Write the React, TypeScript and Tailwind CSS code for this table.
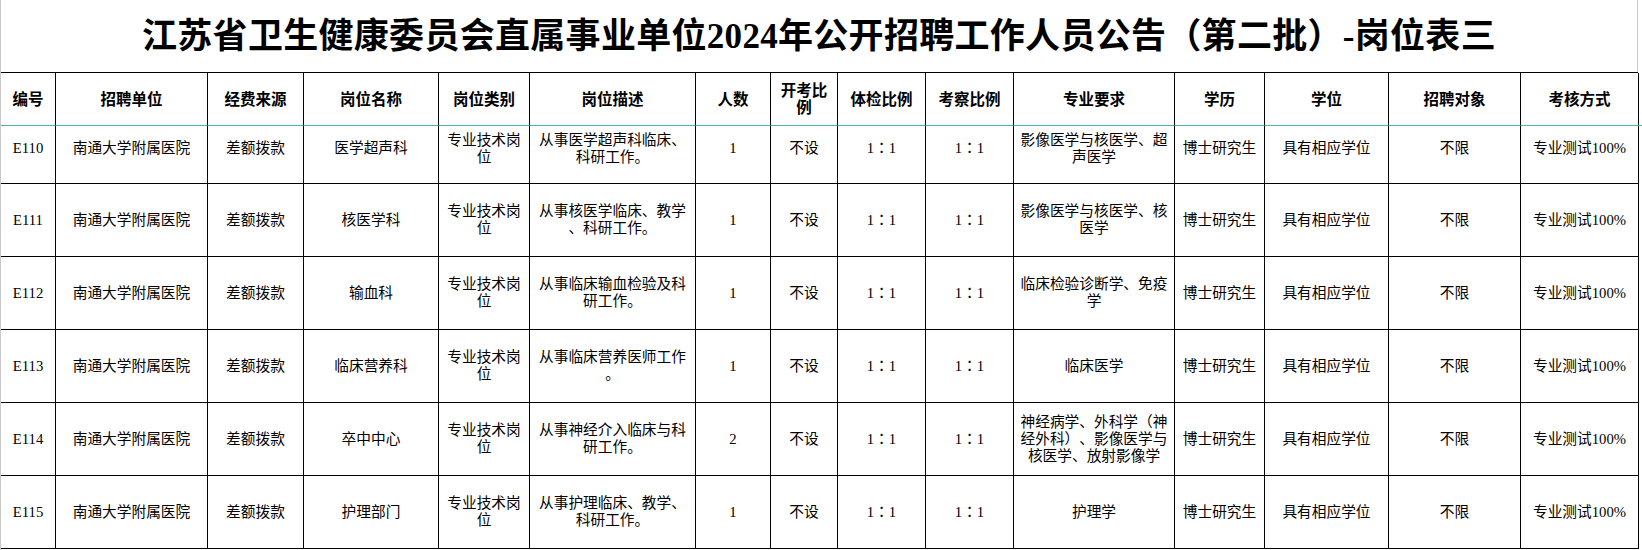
type Row = {
  code: string;
  unit: string;
  funding: string;
  post: string[];
  category: string[];
  desc: string[];
  count: string;
  exam: string;
  physical: string;
  inspect: string;
  major: string[];
  education: string;
  degree: string;
  target: string;
  method: string;
};

const COLS =
  "grid grid-cols-[55px_152px_96px_135px_91px_166px_75px_67px_88px_88px_161px_90px_124px_132px_118px]";

const HEADERS: string[][] = [
  ["编号"],
  ["招聘单位"],
  ["经费来源"],
  ["岗位名称"],
  ["岗位类别"],
  ["岗位描述"],
  ["人数"],
  ["开考比", "例"],
  ["体检比例"],
  ["考察比例"],
  ["专业要求"],
  ["学历"],
  ["学位"],
  ["招聘对象"],
  ["考核方式"],
];

const base = {
  unit: "南通大学附属医院",
  funding: "差额拨款",
  category: ["专业技术岗", "位"],
  exam: "不设",
  physical: "1：1",
  inspect: "1：1",
  education: "博士研究生",
  degree: "具有相应学位",
  target: "不限",
  method: "专业测试100%",
};

const ROWS: Row[] = [
  {
    ...base,
    code: "E110",
    post: ["医学超声科"],
    desc: ["从事医学超声科临床、", "科研工作。"],
    count: "1",
    major: ["影像医学与核医学、超", "声医学"],
  },
  {
    ...base,
    code: "E111",
    post: ["核医学科"],
    desc: ["从事核医学临床、教学", "、科研工作。"],
    count: "1",
    major: ["影像医学与核医学、核", "医学"],
  },
  {
    ...base,
    code: "E112",
    post: ["输血科"],
    desc: ["从事临床输血检验及科", "研工作。"],
    count: "1",
    major: ["临床检验诊断学、免疫", "学"],
  },
  {
    ...base,
    code: "E113",
    post: ["临床营养科"],
    desc: ["从事临床营养医师工作", "。"],
    count: "1",
    major: ["临床医学"],
  },
  {
    ...base,
    code: "E114",
    post: ["卒中中心"],
    desc: ["从事神经介入临床与科", "研工作。"],
    count: "2",
    major: ["神经病学、外科学（神", "经外科）、影像医学与", "核医学、放射影像学"],
  },
  {
    ...base,
    code: "E115",
    post: ["护理部门"],
    desc: ["从事护理临床、教学、", "科研工作。"],
    count: "1",
    major: ["护理学"],
  },
];

const FONT = { fontFamily: '"Liberation Serif", "Noto Sans CJK SC", serif' };
// centred full-width colon for the 1：1 ratios
const RATIO_FONT = '"Liberation Serif", "Noto Sans CJK TC", serif';

export default function App() {
  return (
    <div className="flex h-[550px] w-[1642px] overflow-hidden bg-white text-black" style={FONT}>
      <div className="w-[1638px] border-l border-[#c9c9c9]">
        <header className="flex h-[72px] items-center justify-center border-r border-[#c9c9c9]">
          <h1 className="text-[35px] font-bold leading-none tracking-[0.3px] [text-spacing-trim:space-all]">
            江苏省卫生健康委员会直属事业单位2024年公开招聘工作人员公告（第二批）-岗位表三
          </h1>
        </header>

        <div className="border-t border-black">
          <div className={COLS}>
            {HEADERS.map((lines, i) => (
              <Cell key={i} className="h-[53px] border-b-[#4ab9aa] text-[15.5px] font-bold" lines={lines} />
            ))}
          </div>

          {ROWS.map((row, idx) => (
            <div key={row.code} className={COLS}>
              {[
                [row.code],
                [row.unit],
                [row.funding],
                row.post,
                row.category,
                row.desc,
                [row.count],
                [row.exam],
                [row.physical],
                [row.inspect],
                row.major,
                [row.education],
                [row.degree],
                [row.target],
                [row.method],
              ].map((lines, i) => (
                <Cell
                  key={i}
                  lines={lines}
                  font={i === 8 || i === 9 ? RATIO_FONT : undefined}
                  className={idx === 0 ? "h-[58px] pb-[12px] text-[14.7px]" : "h-[73px] text-[14.7px]"}
                />
              ))}
            </div>
          ))}
        </div>
      </div>
      <div className="flex-1">
        <div className="mt-[125px] h-px bg-[#4ab9aa]" />
      </div>
    </div>
  );
}

function Cell({ lines, className, font }: { lines: string[]; className: string; font?: string }) {
  return (
    <div
      className={`flex flex-col items-center justify-center border-r border-b border-black text-center leading-[17px] whitespace-nowrap [text-spacing-trim:space-all] ${className}`}
      style={font ? { fontFamily: font } : undefined}
    >
      {lines.map((line, i) => (
        <span key={i}>{line}</span>
      ))}
    </div>
  );
}
